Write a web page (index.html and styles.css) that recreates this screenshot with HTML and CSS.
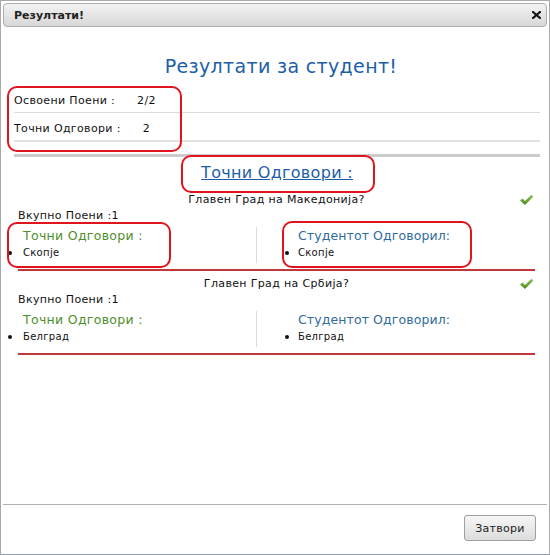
FILE: index.html
```html
<!DOCTYPE html>
<html lang="mk">
<head>
<meta charset="utf-8">
<title>Резултати!</title>
<link rel="stylesheet" href="styles.css">
</head>
<body>
<div class="dialog">
  <div class="titlebar">
    <span class="titlebar-text">Резултати!</span>
    <svg class="close" width="9" height="8" viewBox="0 0 9 8"><path d="M1 1 L8 7 M8 1 L1 7" stroke="#111" stroke-width="2.2" stroke-linecap="square"/></svg>
  </div>
  <div class="content">
    <h1 class="main-title">Резултати за студент!</h1>
    <div class="summary">
      <div class="summary-row"><span>Освоени Поени :</span><span class="val">2/2</span></div>
      <div class="summary-row thick"><span>Точни Одговори :</span><span class="val">2</span></div>
    </div>
    <div class="section-head"><a href="#" class="section-link">Точни Одговори :</a></div>

    <div class="qblock">
      <div class="qrow">
        <span></span>
        <span class="qtext">Главен Град на Македонија?</span>
        <svg class="check" width="15" height="12" viewBox="0 0 15 12"><defs><linearGradient id="g1" x1="0" y1="0" x2="0" y2="1"><stop offset="0" stop-color="#8cc152"/><stop offset="1" stop-color="#4d8a1e"/></linearGradient></defs><path d="M1 6.5 L3.5 4.5 L6 7 L12.5 0.8 L14.2 2.8 L6 11 Z" fill="url(#g1)"/></svg>
      </div>
      <div class="total">Вкупно Поени :1</div>
      <div class="cols">
        <div class="col col-left">
          <div class="col-head green">Точни Одговори :</div>
          <ul class="answers"><li>Скопје</li></ul>
        </div>
        <div class="col col-right">
          <div class="col-head blue">Студентот Одговорил:</div>
          <ul class="answers"><li>Скопје</li></ul>
        </div>
      </div>
    </div>

    <div class="qblock">
      <div class="qrow">
        <span></span>
        <span class="qtext">Главен Град на Србија?</span>
        <svg class="check" width="15" height="12" viewBox="0 0 15 12"><defs><linearGradient id="g2" x1="0" y1="0" x2="0" y2="1"><stop offset="0" stop-color="#8cc152"/><stop offset="1" stop-color="#4d8a1e"/></linearGradient></defs><path d="M1 6.5 L3.5 4.5 L6 7 L12.5 0.8 L14.2 2.8 L6 11 Z" fill="url(#g2)"/></svg>
      </div>
      <div class="total">Вкупно Поени :1</div>
      <div class="cols">
        <div class="col col-left">
          <div class="col-head green">Точни Одговори :</div>
          <ul class="answers"><li>Белград</li></ul>
        </div>
        <div class="col col-right">
          <div class="col-head blue">Студентот Одговорил:</div>
          <ul class="answers"><li>Белград</li></ul>
        </div>
      </div>
    </div>
  </div>
  <div class="footer">
    <button class="btn">Затвори</button>
  </div>
</div>

<div class="mark mark-summary"></div>
<div class="mark mark-head"></div>
<div class="mark mark-left"></div>
<div class="mark mark-right"></div>
</body>
</html>
```
FILE: styles.css
```css
* { box-sizing: border-box; }
html, body { margin: 0; padding: 0; }
body {
  font-family: "DejaVu Sans", Verdana, sans-serif;
  font-size: 11px;
  letter-spacing: 0.35px;
  color: #111;
  background: #fff;
  position: relative;
  width: 550px;
  height: 555px;
  overflow: hidden;
}
.dialog {
  width: 550px;
  height: 555px;
  border: 1px solid #a9a9a9;
  border-bottom-color: #8f9db0;
  padding: 2px;
  display: flex;
  flex-direction: column;
  background: #fff;
}
.titlebar {
  height: 24px;
  border: 1px solid #adadad;
  border-radius: 4px;
  background: linear-gradient(#f3f3f3, #d7d7d7);
  display: flex;
  align-items: center;
  justify-content: space-between;
  padding: 0 5px 0 10px;
  flex: none;
}
.titlebar-text {
  font-weight: bold;
  font-size: 11px;
  letter-spacing: 0;
  color: #222;
}
.close { display: block; }
.content {
  flex: 1;
  padding: 0 7px 0 11px;
}
.main-title {
  margin: 28px 0 0;
  padding-left: 8px;
  text-align: center;
  font-weight: normal;
  font-size: 19px;
  letter-spacing: 0.35px;
  line-height: 22px;
  color: #1d5ea6;
}
.summary {
  margin-top: 8px;
  border-bottom: 3px solid #cbcbcb;
  padding-bottom: 12px;
}
.summary-row {
  padding: 9px 0 4px;
  line-height: 14px;
  border-bottom: 1px solid #dadada;
}
.summary-row.thick { border-bottom: 2px solid #e2e2e2; }
.val { margin-left: 22px; }
.section-head {
  margin-top: 6px;
  margin-bottom: 2px;
  text-align: center;
  line-height: 20px;
}
.section-link {
  font-size: 16px;
  letter-spacing: 0.3px;
  color: #1d5ea6;
  text-decoration: underline;
}
.qblock {
  margin: 0 5px 0 4px;
  padding-top: 6px;
}
.qrow {
  display: grid;
  grid-template-columns: 1fr auto 1fr;
  align-items: center;
  line-height: 14px;
}
.qrow .check { justify-self: end; margin-right: 1px; }
.total {
  margin-top: 2px;
  line-height: 14px;
}
.cols {
  display: flex;
  margin-top: 4px;
  padding-bottom: 6px;
  border-bottom: 2px solid #c0363a;
}
.col {
  padding-top: 1px;
  padding-bottom: 3px;
}
.col-left {
  width: 239px;
  padding-left: 5px;
  border-right: 1px solid #dcdcdc;
}
.col-right {
  flex: 1;
  padding-left: 41px;
}
.col-head {
  font-size: 12.5px;
  letter-spacing: 0.3px;
  line-height: 16px;
}
.col-right .col-head { letter-spacing: 0.1px; }
.green { color: #4e8f2c; }
.blue { color: #2f6b9c; }
.answers {
  list-style: none;
  margin: 2px 0 0;
  padding: 0;
  font-size: 10px;
  letter-spacing: 0.3px;
  line-height: 14px;
}
.answers li {
  position: relative;
}
.answers li::before {
  content: "";
  position: absolute;
  left: -15px;
  top: 5px;
  width: 4px;
  height: 4px;
  border-radius: 50%;
  background: #111;
}
.col-right .answers li::before { left: -13px; }
.footer {
  flex: none;
  border-top: 1px solid #b0b0b0;
  padding: 10px 11px 11px 0;
  display: flex;
  justify-content: flex-end;
}
.btn {
  width: 72px;
  height: 26px;
  border: 1px solid #9f9f9f;
  border-radius: 3px;
  background: linear-gradient(#f6f6f6, #dcdcdc);
  font-family: "DejaVu Sans", Verdana, sans-serif;
  font-size: 11px;
  letter-spacing: 0.3px;
  color: #222;
  padding: 0;
}
.mark {
  position: absolute;
  border: 2px solid #e0141c;
  border-radius: 10px;
  pointer-events: none;
}
.mark-summary { left: 7px; top: 86px; width: 175px; height: 66px; }
.mark-head { left: 181px; top: 155px; width: 194px; height: 38px; }
.mark-left { left: 7px; top: 222px; width: 164px; height: 46px; }
.mark-right { left: 282px; top: 221px; width: 190px; height: 47px; }
```
